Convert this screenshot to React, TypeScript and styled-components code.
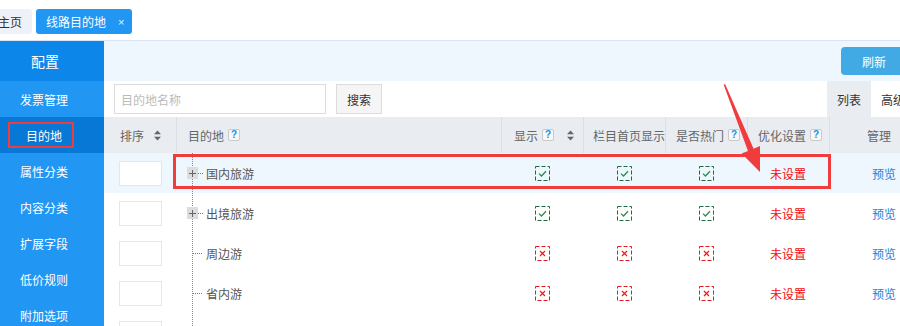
import React from "react";
import styled, { createGlobalStyle } from "styled-components";

const GlobalStyle = createGlobalStyle`
  html, body { margin: 0; padding: 0; background: #fff; }
  body {
    font-family: "Noto Sans CJK SC", "Noto Sans", sans-serif;
    font-size: 12px;
    color: #555;
    overflow: hidden;
  }
  * { box-sizing: border-box; }
`;

const Page = styled.div`
  position: relative;
  width: 900px;
  height: 326px;
  overflow: hidden;
`;

const TabBar = styled.div`
  height: 41px;
  border-bottom: 1px solid #d9e5f5;
  display: flex;
  align-items: flex-start;
  padding-top: 9px;
  gap: 4px;
`;

const Tab = styled.div<{ $active?: boolean }>`
  height: 25px;
  display: flex;
  align-items: center;
  gap: 12px;
  padding: ${(p) => (p.$active ? "0 8px 0 10px" : "0 10px")};
  margin-left: ${(p) => (p.$active ? "0" : "-12px")};
  border-radius: 3px;
  font-size: 12px;
  background: ${(p) => (p.$active ? "#2196f3" : "#eef1f7")};
  color: ${(p) => (p.$active ? "#fff" : "#333")};
`;

const TabClose = styled.span`
  font-family: "Liberation Sans", sans-serif;
  font-size: 11px;
  color: #e6f2fe;
`;

const Body = styled.div`
  display: flex;
  height: 285px;
`;

const Sidebar = styled.nav`
  width: 104px;
  flex-shrink: 0;
  background: #2196f3;
  display: flex;
  flex-direction: column;
  overflow: hidden;
`;

const SideHeader = styled.div`
  height: 40px;
  flex-shrink: 0;
  display: flex;
  align-items: center;
  justify-content: center;
  padding-right: 14px;
  background: #0c87e9;
  color: #fff;
  font-size: 14px;
`;

const SideItem = styled.div<{ $active?: boolean }>`
  height: 36px;
  flex-shrink: 0;
  display: flex;
  align-items: center;
  justify-content: center;
  padding-right: 16px;
  color: #fff;
  font-size: 12px;
  background: ${(p) => (p.$active ? "#0878d6" : "transparent")};
`;

const Main = styled.main`
  flex: 1;
  min-width: 0;
  overflow: hidden;
  display: flex;
  flex-direction: column;
`;

const Toolbar = styled.div`
  height: 40px;
  flex-shrink: 0;
  background: #eef6fe;
  display: flex;
  justify-content: flex-end;
  align-items: center;
`;

const RefreshButton = styled.button`
  width: 66px;
  height: 28px;
  margin-right: -7px;
  border: none;
  border-radius: 4px;
  background: #41aae4;
  color: #fff;
  font-family: inherit;
  font-size: 12px;
  padding: 0;
`;

const SearchRow = styled.div`
  height: 36px;
  flex-shrink: 0;
  display: flex;
  align-items: center;
  padding-left: 10px;
`;

const SearchInput = styled.input`
  width: 212px;
  height: 30px;
  border: 1px solid #dcdcdc;
  padding: 0 6px;
  font-family: inherit;
  font-size: 12px;
  color: #333;
  outline: none;
  &::placeholder { color: #bbb; }
`;

const SearchButton = styled.button`
  margin-left: 10px;
  width: 46px;
  height: 30px;
  border: 1px solid #dcdcdc;
  background: #f5f5f5;
  color: #333;
  font-family: inherit;
  font-size: 12px;
  padding: 0;
`;

const ViewTabs = styled.div`
  margin-left: auto;
  margin-right: -15px;
  align-self: stretch;
  display: flex;
`;

const ViewTab = styled.div<{ $active?: boolean }>`
  width: 44px;
  display: flex;
  align-items: center;
  justify-content: center;
  color: #333;
  background: ${(p) => (p.$active ? "#e9ecf1" : "#fff")};
`;

const COLS = "72px 325px 82px 82px 82px 82px 100px";

const HeaderRow = styled.div`
  display: grid;
  grid-template-columns: ${COLS};
  width: 825px;
  height: 36px;
  flex-shrink: 0;
  background: #e9ecf1;
`;

const HeaderCell = styled.div<{ $pl: number; $first?: boolean; $gap?: number }>`
  display: flex;
  align-items: center;
  gap: ${(p) => p.$gap ?? 4}px;
  padding-left: ${(p) => p.$pl}px;
  border-left: ${(p) => (p.$first ? "none" : "1px solid #dcdfe5")};
  white-space: nowrap;
  overflow: hidden;
  color: #666;
`;

const HeaderSpacer = styled.span`
  width: 5px;
`;

const Row = styled.div<{ $hl?: boolean }>`
  display: grid;
  grid-template-columns: ${COLS};
  width: 825px;
  height: 40px;
  flex-shrink: 0;
  background: ${(p) => (p.$hl ? "#eef6fe" : "#fff")};
`;

const Cell = styled.div<{ $center?: boolean; $pl?: number }>`
  display: flex;
  align-items: center;
  justify-content: ${(p) => (p.$center ? "center" : "flex-start")};
  padding-left: ${(p) => p.$pl ?? 0}px;
  white-space: nowrap;
`;

const SortBox = styled.div`
  width: 43px;
  height: 25px;
  background: #fff;
  border: 1px solid #e6e6e6;
`;

const TreeCell = styled.div`
  display: flex;
  align-items: center;
  padding-left: 11px;
  color: #555;
  background-image: repeating-linear-gradient(to bottom, #888 0 1px, transparent 1px 2px);
  background-size: 1px 100%;
  background-position: 16px 0;
  background-repeat: no-repeat;
`;

const Connector = styled.span<{ $w: number; $ml?: number; $mr: number }>`
  width: ${(p) => p.$w}px;
  height: 1px;
  margin-left: ${(p) => p.$ml ?? 0}px;
  margin-right: ${(p) => p.$mr}px;
  background-image: repeating-linear-gradient(to right, #777 0 1px, transparent 1px 2px);
`;

const Unset = styled.span`
  color: #f20c0c;
`;

const PreviewLink = styled.span`
  color: #1a85d6;
`;

const Help = styled.span`
  width: 12px;
  height: 12px;
  border: 1px solid #cacaca;
  border-radius: 2px;
  background: #f7f7f7;
  display: inline-flex;
  align-items: center;
  justify-content: center;
  font-family: "Liberation Sans", sans-serif;
  font-weight: bold;
  font-size: 10px;
  line-height: 1;
  color: #1a8fe0;
`;

const Annotation = styled.div<{ $w: number }>`
  position: absolute;
  border: ${(p) => p.$w}px solid #f03c3c;
  pointer-events: none;
`;

const ArrowLayer = styled.svg`
  position: absolute;
  left: 0;
  top: 0;
  pointer-events: none;
`;

const SortIcon = () => (
  <svg width="7" height="11" viewBox="0 0 7 11">
    <polygon points="0,4.2 3.5,0.5 7,4.2" fill="#666" />
    <polygon points="0,6.8 3.5,10.5 7,6.8" fill="#666" />
  </svg>
);

const PlusBox = () => (
  <svg width="11" height="12" viewBox="0 0 11 12">
    <rect x="0" y="0" width="11" height="12" fill="#dcdcdc" />
    <path d="M2 6.5H9M5.5 3V10" stroke="#666" strokeWidth="1" />
  </svg>
);

const Check = ({ on }: { on: boolean }) => {
  const c = on ? "#1b6b3f" : "#e01b1b";
  return (
    <svg width="15" height="15" viewBox="0 0 15 15">
      <rect x="0.5" y="0.5" width="14" height="14" fill="none" stroke={c} strokeDasharray="4 2" />
      {on ? (
        <path d="M4 7.6L6.5 10L11 5.2" fill="none" stroke="#2f8a50" strokeWidth="1.3" />
      ) : (
        <path d="M5 5L10 10M10 5L5 10" fill="none" stroke="#e81c1c" strokeWidth="1.2" />
      )}
    </svg>
  );
};

type Item = { name: string; expand: boolean; on: boolean; hl?: boolean };

const rows: Item[] = [
  { name: "国内旅游", expand: true, on: true, hl: true },
  { name: "出境旅游", expand: true, on: true },
  { name: "周边游", expand: false, on: false },
  { name: "省内游", expand: false, on: false },
  { name: "", expand: false, on: false },
];

const sideItems = ["发票管理", "目的地", "属性分类", "内容分类", "扩展字段", "低价规则", "附加选项"];

export default function App() {
  return (
    <Page>
      <GlobalStyle />
      <TabBar>
        <Tab>主页</Tab>
        <Tab $active>
          线路目的地<TabClose>×</TabClose>
        </Tab>
      </TabBar>
      <Body>
        <Sidebar>
          <SideHeader>配置</SideHeader>
          {sideItems.map((s) => (
            <SideItem key={s} $active={s === "目的地"}>
              {s}
            </SideItem>
          ))}
        </Sidebar>
        <Main>
          <Toolbar>
            <RefreshButton>刷新</RefreshButton>
          </Toolbar>
          <SearchRow>
            <SearchInput placeholder="目的地名称" />
            <SearchButton>搜索</SearchButton>
            <ViewTabs>
              <ViewTab $active>列表</ViewTab>
              <ViewTab>高级</ViewTab>
            </ViewTabs>
          </SearchRow>
          <HeaderRow>
            <HeaderCell $pl={16} $first $gap={10}>
              排序 <SortIcon />
            </HeaderCell>
            <HeaderCell $pl={11}>
              目的地 <Help>?</Help>
            </HeaderCell>
            <HeaderCell $pl={12}>
              显示 <Help>?</Help>
              <HeaderSpacer />
              <SortIcon />
            </HeaderCell>
            <HeaderCell $pl={9}>栏目首页显示</HeaderCell>
            <HeaderCell $pl={10}>
              是否热门 <Help>?</Help>
            </HeaderCell>
            <HeaderCell $pl={10}>
              优化设置 <Help>?</Help>
            </HeaderCell>
            <HeaderCell $pl={37}>管理</HeaderCell>
          </HeaderRow>
          {rows.map((r, i) => (
            <Row key={i} $hl={r.hl}>
              <Cell $pl={15}>
                <SortBox />
              </Cell>
              <TreeCell>
                {r.expand ? (
                  <>
                    <PlusBox />
                    <Connector $w={6} $mr={2} />
                  </>
                ) : (
                  <Connector $w={10} $ml={6} $mr={3} />
                )}
                {r.name}
              </TreeCell>
              <Cell $center>
                <Check on={r.on} />
              </Cell>
              <Cell $center>
                <Check on={r.on} />
              </Cell>
              <Cell $center>
                <Check on={r.on} />
              </Cell>
              <Cell $center>
                <Unset>未设置</Unset>
              </Cell>
              <Cell $pl={43}>
                <PreviewLink>预览</PreviewLink>
              </Cell>
            </Row>
          ))}
        </Main>
      </Body>
      <Annotation $w={2} style={{ left: 8, top: 122, width: 66, height: 26 }} />
      <Annotation $w={3} style={{ left: 173, top: 154, width: 658, height: 35 }} />
      <ArrowLayer width="900" height="326" viewBox="0 0 900 326">
        <polygon
          points="723.6,84.6 725.2,84.2 753.6,148.7 760,146 760,172 741.6,153.6 748,151"
          fill="#f03c3c"
        />
      </ArrowLayer>
    </Page>
  );
}
